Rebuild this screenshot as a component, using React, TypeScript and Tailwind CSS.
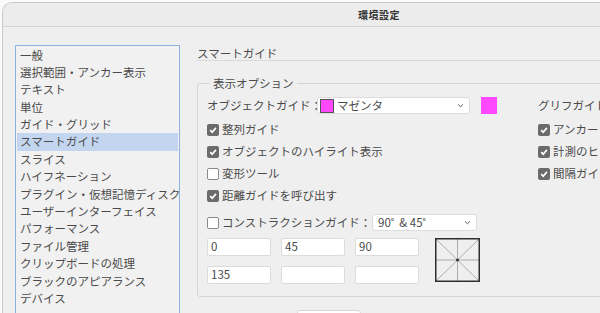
import type { ReactNode } from "react";

const CATEGORIES = [
  "一般",
  "選択範囲・アンカー表示",
  "テキスト",
  "単位",
  "ガイド・グリッド",
  "スマートガイド",
  "スライス",
  "ハイフネーション",
  "プラグイン・仮想記憶ディスク",
  "ユーザーインターフェイス",
  "パフォーマンス",
  "ファイル管理",
  "クリップボードの処理",
  "ブラックのアピアランス",
  "デバイス",
];

function Check({ on }: { on: boolean }) {
  if (!on) {
    return <span className="h-[12px] w-[12px] shrink-0 rounded-[2px] border border-[#8a8a8a] bg-white" />;
  }
  return (
    <span className="flex h-[12px] w-[12px] shrink-0 items-center justify-center rounded-[2px] bg-[#6b6b6b]">
      <svg viewBox="0 0 12 12" className="h-[12px] w-[12px]">
        <path d="M3.2 6.1 5.2 8.2 8.9 3.9" fill="none" stroke="#fff" strokeWidth="1.7" />
      </svg>
    </span>
  );
}

function CheckRow({ on, children }: { on: boolean; children: ReactNode }) {
  return (
    <div className="flex h-[17px] items-center gap-[3px] whitespace-nowrap">
      <Check on={on} />
      <span>{children}</span>
    </div>
  );
}

function Chevron() {
  return (
    <svg viewBox="0 0 10 10" className="h-[9px] w-[9px] shrink-0">
      <path d="M2.3 3.8 5 6.4 7.7 3.8" fill="none" stroke="#555" strokeWidth="1.1" />
    </svg>
  );
}

function Field({ value }: { value?: string }) {
  return (
    <div className="flex h-[18px] w-[64px] items-center rounded-[2px] border border-[#dcdcdc] bg-white pl-[3px]">
      {value}
    </div>
  );
}

function AngleDiagram() {
  return (
    <svg viewBox="0 0 45 44" className="h-[44px] w-[45px]">
      <line x1="22.5" y1="1" x2="22.5" y2="43" stroke="#9a9a9a" strokeWidth="0.8" />
      <line x1="1" y1="22" x2="44" y2="22" stroke="#9a9a9a" strokeWidth="0.8" />
      <line x1="1" y1="1" x2="44" y2="43" stroke="#9a9a9a" strokeWidth="0.8" />
      <line x1="44" y1="1" x2="1" y2="43" stroke="#9a9a9a" strokeWidth="0.8" />
      <rect x="0.75" y="0.75" width="43.5" height="42.5" fill="none" stroke="#2e2e2e" strokeWidth="1.5" />
      <rect x="21.3" y="20.8" width="2.4" height="2.4" fill="#222" />
    </svg>
  );
}

export default function App() {
  return (
    <div className="h-[313px] w-[600px] overflow-hidden bg-[#fbfbfb] pl-[2px] pt-[2px] font-['Noto_Sans_CJK_JP','Noto_Sans',sans-serif] text-[11.5px] text-[#4a4a4a]">
      <div className="h-[330px] w-[700px] overflow-hidden rounded-tl-[10px] border-l border-t border-[#c9c9c9] bg-[#efefef]">
        {/* title bar */}
        <div className="flex h-[24px] items-center border-b border-[#d6d6d6] bg-[#ececec] pl-[355px]">
          <span className="text-[10px] font-bold tracking-[0.5px] text-[#333]">環境設定</span>
        </div>

        <div className="flex pl-[12px] pt-[18px]">
          {/* category list */}
          <div className="h-[280px] w-[165px] shrink-0 border border-[#8fb1e0] bg-[#f1f1f1] p-[1px] pt-[0.5px]">
            {CATEGORIES.map((c) => (
              <div
                key={c}
                className={`h-[17.4px] whitespace-nowrap pl-[3px] leading-[17.4px] ${
                  c === "スマートガイド" ? "bg-[#c4d6ef]" : ""
                }`}
              >
                {c}
              </div>
            ))}
          </div>

          {/* settings pane */}
          <div className="ml-[17px] flex w-[460px] flex-col">
            <div className="flex h-[15px] items-center pt-[2px]">スマートガイド</div>
            <div className="mt-[0px] h-px bg-[#d9d9d9]" />

            <fieldset className="mt-[14px] w-[440px] rounded-[3px] border border-[#d6d6d6] pb-[12px] pl-[9px] pr-0">
              <legend className="ml-[3px] px-[3px] leading-[16px]">表示オプション</legend>
              <div className="flex pt-[6px]">
                <div className="flex w-[331px] shrink-0 flex-col gap-[5px]">
                  <div className="flex h-[17px] items-center whitespace-nowrap">
                    <span className="w-[110px]">オブジェクトガイド：</span>
                    <div className="flex h-[17px] w-[153px] items-center rounded-[3px] border border-[#dcdcdc] bg-white pl-[2px] pr-[4px]">
                      <span className="h-[14px] w-[14px] border border-[#555] bg-[#ff48ff]" />
                      <span className="ml-[3px] flex-1">マゼンタ</span>
                      <Chevron />
                    </div>
                    <span className="ml-[11px] h-[17px] w-[16px] bg-[#ff48ff]" />
                  </div>
                  <div className="mt-[2px]">
                    <CheckRow on>整列ガイド</CheckRow>
                  </div>
                  <CheckRow on>オブジェクトのハイライト表示</CheckRow>
                  <CheckRow on={false}>変形ツール</CheckRow>
                  <CheckRow on>距離ガイドを呼び出す</CheckRow>
                  <div className="mt-[5px] flex h-[17px] items-center whitespace-nowrap">
                    <Check on={false} />
                    <span className="ml-[3px] w-[150px]">コンストラクションガイド：</span>
                    <div className="flex h-[17px] w-[105px] items-center rounded-[3px] border border-[#dcdcdc] bg-white pl-[5px] pr-[4px]">
                      <span className="flex-1">90˚ &nbsp;&amp; 45˚</span>
                      <Chevron />
                    </div>
                  </div>
                  <div className="mt-[2px] flex items-start">
                    <div className="grid grid-cols-[64px_64px_64px] gap-x-[10px] gap-y-[10px]">
                      <Field value="0" />
                      <Field value="45" />
                      <Field value="90" />
                      <Field value="135" />
                      <Field />
                      <Field />
                    </div>
                    <div className="ml-[16px]">
                      <AngleDiagram />
                    </div>
                  </div>
                </div>

                <div className="flex flex-col gap-[5px] whitespace-nowrap">
                  <div className="flex h-[17px] items-center">グリフガイド</div>
                  <div className="mt-[2px]">
                    <CheckRow on>アンカー / パスのラベル</CheckRow>
                  </div>
                  <CheckRow on>計測のヒント</CheckRow>
                  <CheckRow on>間隔ガイド</CheckRow>
                </div>
              </div>
            </fieldset>

            <div className="ml-[100px] mt-[13px] h-[20px] w-[64px] rounded-[3px] border border-[#d6d6d6] bg-white" />
          </div>
        </div>
      </div>
    </div>
  );
}
